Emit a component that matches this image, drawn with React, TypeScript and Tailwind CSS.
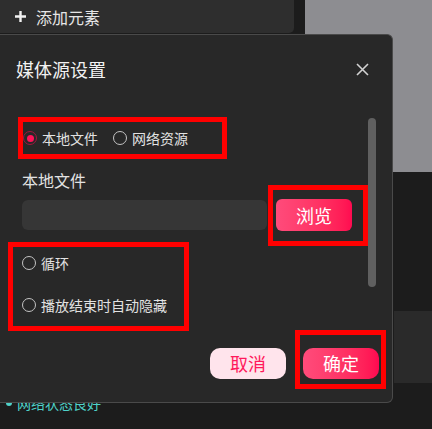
import React from 'react';

const FONT = { fontFamily: '"Noto Sans CJK SC", "Noto Sans", sans-serif' };

const Radio: React.FC<{ checked?: boolean; label: string }> = ({ checked, label }) => (
  <label className="flex items-center gap-[5px] h-[20px] text-[14px] leading-[20px] text-[#e2e2e2]">
    {checked ? (
      <span className="shrink-0 w-[14px] h-[14px] rounded-full border-[1.5px] border-[#a3163f] flex items-center justify-center">
        <span className="w-[7px] h-[7px] rounded-full bg-[#ff1458]" />
      </span>
    ) : (
      <span className="shrink-0 w-[14px] h-[14px] rounded-full border-[1.5px] border-[#c4c4c4]" />
    )}
    {label}
  </label>
);

export default function App() {
  return (
    <div className="relative w-[432px] h-[429px] overflow-hidden bg-[#1c1c1c]" style={FONT}>
      {/* page behind the modal */}
      <div className="flex h-[172px]">
        <div className="w-[294px]">
          <div className="h-[33px] bg-[#2e2e2e] rounded-br-[5px] flex items-center pl-[14px] gap-[9px] text-[16px] text-[#e6e6e6]">
            <svg width="13" height="13" viewBox="0 0 13 13">
              <path d="M6.5 1v11M1 6.5h11" stroke="#f2f2f2" strokeWidth="2.4" />
            </svg>
            添加元素
          </div>
        </div>
        <div className="ml-[11px] flex-1 bg-[#8d8d91]" />
      </div>
      <div className="flex justify-end mt-[139px]">
        <div className="w-[38px] h-[72px] bg-[#2a2a2a]" />
      </div>
      <div className="flex items-center gap-[5px] pl-[6px] mt-[13px] text-[14px] leading-[14px] text-[#4fd2c9]">
        <span className="w-[6px] h-[6px] rounded-full bg-[#4fd2c9]" />
        网络状态良好
      </div>

      {/* media source modal */}
      <div className="absolute left-0 top-[34px] w-[393px] h-[369px] bg-[#282828] border border-l-0 border-[#4a4a4a] rounded-r-[6px] flex flex-col">
        <div className="h-[68px] shrink-0 flex items-center justify-between pl-[16px] pr-[23px]">
          <span className="text-[18px] leading-[24px] text-[#f2f2f2]">媒体源设置</span>
          <svg width="13" height="13" viewBox="0 0 13 13">
            <path d="M1 1l11 11M12 1L1 12" stroke="#d2d2d2" strokeWidth="1.6" />
          </svg>
        </div>

        <div className="flex">
          <div className="w-[368px] flex flex-col">
            <div className="ml-[18px] mt-[14px] w-[209px] h-[42px] border-[5px] border-[#ff0000] flex items-center gap-[15px]">
              <Radio checked label="本地文件" />
              <Radio label="网络资源" />
            </div>

            <div className="ml-[22px] mt-[10px] text-[16px] leading-[22px] text-[#e2e2e2]">本地文件</div>

            <div className="flex items-start mt-[-6px]">
              <div className="ml-[22px] mt-[15px] w-[245px] h-[30px] rounded-[6px] bg-[#363636]" />
              <div className="ml-[1px] w-[100px] h-[61px] border-[5px] border-[#ff0000]">
                <button className="ml-[3px] mt-[9px] w-[76px] h-[32px] rounded-[6px] bg-gradient-to-r from-[#ff4b7b] to-[#ff0a50] text-white text-[18px] leading-[32px]">
                  浏览
                </button>
              </div>
            </div>

            <div className="ml-[8px] mt-[-4px] w-[181px] h-[89px] border-[5px] border-[#ff0000] pl-[9px] pt-[6px] flex flex-col gap-[22px]">
              <Radio label="循环" />
              <Radio label="播放结束时自动隐藏" />
            </div>
          </div>
          <div className="mt-[15px] w-[8px] h-[169px] rounded-full bg-[#606060]" />
        </div>

        <div className="flex justify-end items-start pr-[6px] mt-[-1px]">
          <button className="mt-[18px] w-[76px] h-[31px] rounded-[10px] bg-[#ffe4ec] text-[#ff1a5b] text-[18px] leading-[31px]">
            取消
          </button>
          <div className="ml-[9px] w-[91px] h-[59px] border-[5px] border-[#ff0000]">
            <button className="ml-[3px] mt-[13px] w-[76px] h-[31px] rounded-[10px] bg-gradient-to-r from-[#ff4b7b] to-[#ff0650] text-white text-[18px] leading-[31px]">
              确定
            </button>
          </div>
        </div>
      </div>
    </div>
  );
}
